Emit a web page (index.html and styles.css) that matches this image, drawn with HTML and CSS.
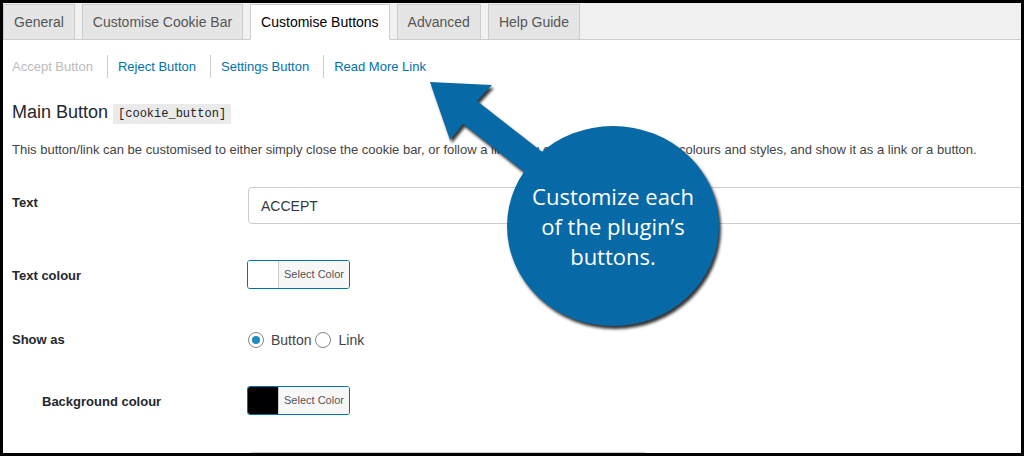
FILE: index.html
```html
<!DOCTYPE html>
<html lang="en">
<head>
<meta charset="utf-8">
<title>Customise Buttons</title>
<link rel="stylesheet" href="styles.css">
</head>
<body>
<div class="frame">
  <nav class="tabbar">
    <a class="tab">General</a>
    <a class="tab">Customise Cookie Bar</a>
    <a class="tab active">Customise Buttons</a>
    <a class="tab">Advanced</a>
    <a class="tab">Help Guide</a>
  </nav>
  <div class="content">
    <ul class="subnav">
      <li class="current">Accept Button</li>
      <li><a>Reject Button</a></li>
      <li><a>Settings Button</a></li>
      <li><a>Read More Link</a></li>
    </ul>
    <h3 class="section-title">Main Button <code class="shortcode">[cookie_button]</code></h3>
    <p class="desc">This button/link can be customised to either simply close the cookie bar, or follow a link. You can also customise the colours and styles, and show it as a link or a button.</p>
    <div class="form">
      <div class="row row-text">
        <div class="label">Text</div>
        <div class="field"><div class="textinput">ACCEPT</div></div>
      </div>
      <div class="row row-color">
        <div class="label">Text colour</div>
        <div class="field">
          <div class="colorbtn"><span class="swatch swatch-white"></span><span class="colorbtn-text">Select Color</span></div>
        </div>
      </div>
      <div class="row row-radio">
        <div class="label">Show as</div>
        <div class="field radios">
          <span class="radio checked"></span><span class="radio-label">Button</span>
          <span class="radio"></span><span class="radio-label">Link</span>
        </div>
      </div>
      <div class="row row-bg">
        <div class="label label-indent">Background colour</div>
        <div class="field">
          <div class="colorbtn"><span class="swatch swatch-black"></span><span class="colorbtn-text">Select Color</span></div>
        </div>
      </div>
      <div class="row row-next">
        <div class="label"></div>
        <div class="field"><div class="selectbox"></div></div>
      </div>
    </div>
  </div>
  <div class="callout">
    <svg class="callout-shape" width="320" height="270" viewBox="0 0 320 270">
      <g>
        <polygon points="10,12 72,15 57,31 180,127 166,150 43,54 30,70" fill="#0769a6"/>
        <ellipse cx="193" cy="156" rx="106" ry="100" fill="#0769a6"/>
      </g>
    </svg>
    <div class="callout-text">Customize each<br>of the plugin’s<br>buttons.</div>
  </div>
</div>
</body>
</html>
```

FILE: styles.css
```css
html, body {
  margin: 0;
  padding: 0;
  background: #000;
}

body {
  font-family: "Liberation Sans", Arial, sans-serif;
}

.frame {
  position: relative;
  width: 1024px;
  height: 456px;
  box-sizing: border-box;
  border: 3px solid #000;
  background: #fff;
  overflow: hidden;
}

/* Tabs */
.tabbar {
  display: flex;
  align-items: flex-end;
  gap: 7px;
  height: 37px;
  box-sizing: border-box;
  border-bottom: 1px solid #ccc;
  background: #f1f1f1;
}

.tab {
  display: flex;
  align-items: center;
  height: 36px;
  margin-bottom: -1px;
  box-sizing: border-box;
  padding: 0 10px;
  border: 1px solid #ccc;
  background: #e5e5e5;
  color: #555;
  font-size: 14px;
}

.tab.active {
  background: #fff;
  color: #000;
  border-bottom-color: #fff;
}

/* Content */
.content {
  padding: 15px 0 0 9px;
}

.subnav {
  display: flex;
  margin: 0;
  padding: 0;
  list-style: none;
  font-size: 13px;
  line-height: 23px;
}

.subnav li {
  padding: 0 14px 0 10px;
  border-left: 1px solid #ccc;
}

.subnav li:first-child {
  padding-left: 0;
  border-left: 0;
}

.subnav a {
  color: #0073aa;
}

.subnav .current {
  color: #bbb;
}

.section-title {
  margin: 22px 0 0;
  font-size: 18px;
  line-height: 24px;
  font-weight: normal;
  color: #23282d;
}

.shortcode {
  display: inline-block;
  vertical-align: 1px;
  padding: 3px 5px;
  font-family: "Liberation Mono", "Courier New", monospace;
  font-size: 12px;
  line-height: 14px;
  background: #eaeaea;
  color: #222;
}

.desc {
  margin: 16px 0 0;
  font-size: 13px;
  line-height: 20px;
  color: #444;
}

/* Form rows */
.form {
  margin-top: 27px;
}

.row {
  display: grid;
  grid-template-columns: 236px 1fr;
  align-items: center;
}

.label {
  font-size: 13px;
  line-height: 20px;
  font-weight: bold;
  color: #23282d;
}

.label-indent {
  padding-left: 30px;
}

.row-text {
  align-items: start;
}

.row-text .label {
  padding-top: 6px;
}

.row-color {
  margin-top: 36px;
  height: 29px;
}

.row-radio {
  margin-top: 39px;
  height: 24px;
}

.row-bg {
  margin-top: 34px;
  height: 29px;
}

.row-next {
  margin-top: 37px;
}

.textinput {
  display: flex;
  align-items: center;
  width: 800px;
  height: 37px;
  box-sizing: border-box;
  padding: 0 12px;
  border: 1px solid #ccc;
  border-radius: 4px;
  font-size: 14px;
  color: #32373c;
}

.selectbox {
  width: 400px;
  height: 37px;
  box-sizing: border-box;
  border: 1px solid #ccc;
  border-radius: 4px;
}

.colorbtn {
  display: inline-flex;
  height: 29px;
  margin-left: -1px;
  box-sizing: border-box;
  border: 1px solid #0073aa;
  border-radius: 3px;
  overflow: hidden;
}

.swatch {
  width: 30px;
  border-right: 1px solid #ccc;
}

.swatch-white {
  background: #fff;
}

.swatch-black {
  background: #000;
}

.colorbtn-text {
  padding: 0 5px;
  background: #f7f7f7;
  font-size: 11px;
  line-height: 27px;
  color: #555;
}

.radios {
  display: flex;
  align-items: center;
  font-size: 14px;
  color: #444;
}

.radio {
  position: relative;
  width: 16px;
  height: 16px;
  box-sizing: border-box;
  border: 1px solid #7e8993;
  border-radius: 50%;
  background: #fff;
}

.radio.checked::before {
  content: "";
  position: absolute;
  left: 3px;
  top: 3px;
  width: 8px;
  height: 8px;
  border-radius: 50%;
  background: #1e8cbe;
}

.radio-label {
  margin: 0 4px 0 7px;
}

/* Callout overlay */
.callout {
  position: absolute;
  left: 417px;
  top: 67px;
  width: 320px;
  height: 270px;
}

.callout-shape {
  display: block;
  filter: drop-shadow(2px 3px 1.5px rgba(0, 0, 0, 0.8));
}

.callout-text {
  position: absolute;
  left: 87px;
  top: 111px;
  width: 212px;
  text-align: center;
  font-family: "Open Sans", "Noto Sans", sans-serif;
  font-size: 22px;
  line-height: 30px;
  color: #fff;
}
```
